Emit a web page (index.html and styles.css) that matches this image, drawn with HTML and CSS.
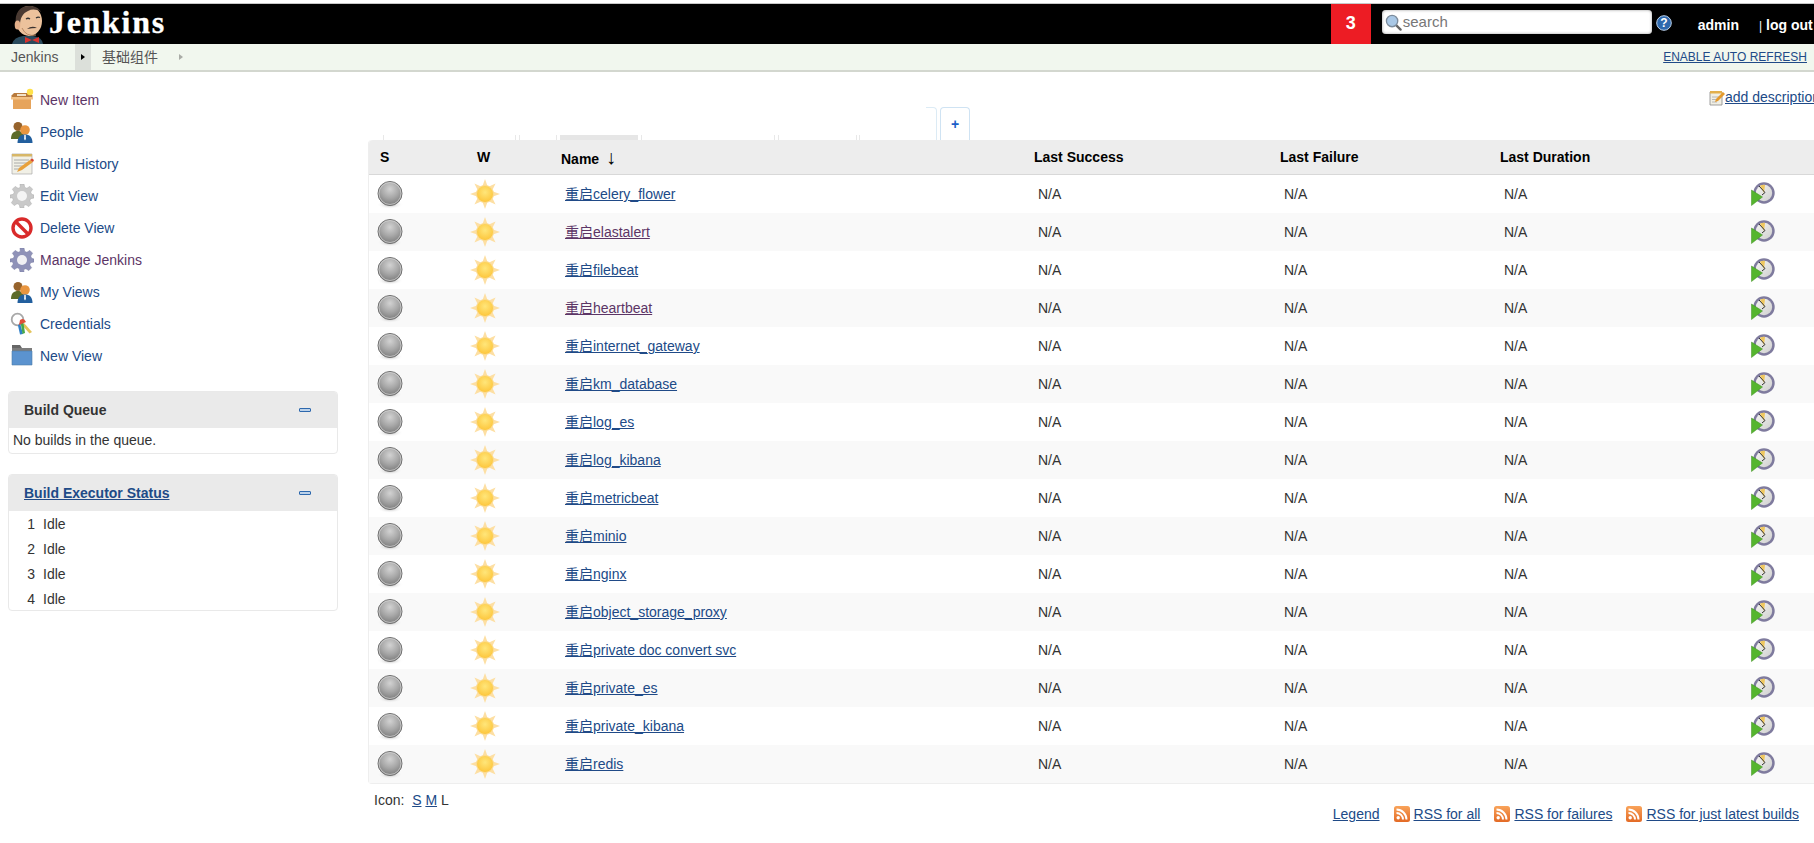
FILE: index.html
```html
<!DOCTYPE html>
<html lang="en">
<head>
<meta charset="utf-8">
<title>基础组件 [Jenkins]</title>
<link rel="stylesheet" href="styles.css">
</head>
<body>
<svg class="defs" width="0" height="0">
  <defs>
    <radialGradient id="ball" cx="50%" cy="32%" r="72%"><stop offset="0" stop-color="#d2d2d2"/><stop offset="0.5" stop-color="#a8a8a8"/><stop offset="1" stop-color="#767676"/></radialGradient>
    <radialGradient id="shade" cx="50%" cy="50%" r="50%"><stop offset="0" stop-color="#a8a8a8"/><stop offset="1" stop-color="#ffffff" stop-opacity="0"/></radialGradient>
    <radialGradient id="sunc" cx="50%" cy="40%" r="60%"><stop offset="0" stop-color="#ffe67a"/><stop offset="1" stop-color="#fdc53a"/></radialGradient>
    <linearGradient id="rssg" x1="0" y1="0" x2="0" y2="1"><stop offset="0" stop-color="#f9a35a"/><stop offset="1" stop-color="#e36a25"/></linearGradient>
    <linearGradient id="clockg" x1="0" y1="0" x2="1" y2="1"><stop offset="0" stop-color="#f6f6f2"/><stop offset="1" stop-color="#cfcfcf"/></linearGradient>
    <symbol id="i-ball" viewBox="0 0 32 32">
      <ellipse cx="15" cy="26.500" rx="13" ry="4.500" fill="url(#shade)"/>
      <circle cx="15" cy="15.500" r="12" fill="url(#ball)" stroke="#6e6e6e" stroke-width="1"/>
      <circle cx="15" cy="15.500" r="11" fill="none" stroke="#d8d8d8" stroke-width=".7"/>
    </symbol>
    <symbol id="i-sun" viewBox="0 0 32 32">
      <g fill="#fddfa3">
        <path d="M16 1l2.500 7h-5zM16 31l2.500-7h-5zM1 16l7 2.500v-5zM31 16l-7 2.500v-5zM5.400 5.400l6.700 3.200-3.500 3.500zM26.600 5.400l-6.700 3.200 3.500 3.500zM5.400 26.600l6.700-3.200-3.500-3.500zM26.600 26.600l-6.700-3.200 3.500-3.500z"/>
      </g>
      <circle cx="16" cy="16" r="8.500" fill="url(#sunc)" stroke="#fcdc94" stroke-width="1"/>
    </symbol>
    <symbol id="i-build" viewBox="0 0 24 24">
      <circle cx="13" cy="11" r="10.700" fill="#7f7b9e"/>
      <circle cx="13" cy="11" r="8.200" fill="url(#clockg)"/>
      <path d="M13 11L9 3.800A8.200 8.200 0 0 1 14 2.900z" fill="#efc75e"/>
      <path d="M8 4L14 10.500L11 13" fill="none" stroke="#333" stroke-width="1"/>
      <path d="M.5 8L11.500 15L.5 23.500z" fill="#55b52e" stroke="#3d8f1e" stroke-width=".5"/>
    </symbol>
    <symbol id="i-people" viewBox="0 0 24 24">
      <circle cx="8" cy="6.500" r="4.500" fill="#96632c"/>
      <path d="M1 19c0-6 3-8 7-8s6 2 6 8z" fill="#5d6b2a"/>
      <circle cx="15" cy="10" r="4.800" fill="#e8953f"/>
      <path d="M7.500 23c0-6 3-8.500 7.500-8.500S22.500 17 22.500 23z" fill="#225f9e"/>
      <path d="M14.200 15h1.600l.2 4-1 1.500-1-1.500z" fill="#dfe8f2"/>
    </symbol>
    <symbol id="i-gear" viewBox="0 0 24 24">
      <path d="M10 0h4l.7 3.400 2.200.9 2.900-1.900 2.800 2.800-1.900 2.900.9 2.200L24 11v3l-3.400.7-.9 2.200 1.900 2.900-2.800 2.800-2.900-1.900-2.200.9L14 24h-4l-.7-3.400-2.200-.9-2.900 1.900-2.800-2.800 1.900-2.900-.9-2.200L0 14v-3l3.400-.7.900-2.200-1.900-2.900 2.800-2.800 2.900 1.900 2.200-.9z" fill="#c9c9c9" stroke="#aaa" stroke-width=".5"/>
      <circle cx="12" cy="12" r="5" fill="#f4f4f4"/>
    </symbol>
    <symbol id="i-gear2" viewBox="0 0 24 24">
      <path d="M10 0h4l.7 3.400 2.200.9 2.900-1.900 2.800 2.800-1.900 2.900.9 2.200L24 11v3l-3.400.7-.9 2.200 1.900 2.900-2.800 2.800-2.900-1.900-2.200.9L14 24h-4l-.7-3.400-2.200-.9-2.900 1.900-2.800-2.800 1.900-2.900-.9-2.200L0 14v-3l3.400-.7.900-2.200-1.900-2.900 2.800-2.800 2.900 1.900 2.200-.9z" fill="#8f92b8" stroke="#777aa0" stroke-width=".5"/>
      <circle cx="12" cy="12" r="5" fill="#f1f1f4"/>
    </symbol>
  </defs>
</svg>

<header class="topbar">
  <div class="logo">
    <svg class="butler" viewBox="0 0 34 40" width="34" height="40" aria-hidden="true">
      <path d="M1 40q2-7 11-8h10q9 1 10 8z" fill="#2a4a5c"/>
      <ellipse cx="18" cy="17" rx="13" ry="15" fill="#ecc29c"/>
      <path d="M5 21C3 9 9 2 18 2c6 0 10 2 12 6-5-3-9-3-13-1-5 2-8 7-8 14z" fill="#4a3a32"/>
      <ellipse cx="6.500" cy="21" rx="2.800" ry="4.500" fill="#e2ae88"/>
      <path d="M15 15q2-1.500 4 0M25 14q2-1.500 4-.5" stroke="#333" stroke-width="1.300" fill="none"/>
      <path d="M16 25q5-4 10-1-5 0-10 1z" fill="#3b3330"/>
      <path d="M11 24q4 9 14 7" stroke="#b98a66" stroke-width="1" fill="none"/>
      <path d="M14 33l7 3 7-3v6l-7-3-7 3z" fill="#d9332e"/>
    </svg>
    <span class="wordmark">Jenkins</span>
  </div>
  <div class="topright">
    <div class="badge">3</div>
    <div class="search">
      <svg class="lens" viewBox="0 0 18 18" width="17" height="17" aria-hidden="true">
        <path d="M11.500 11.500l5 5" stroke="#666" stroke-width="2.500" stroke-linecap="round"/>
        <circle cx="7.500" cy="7.500" r="6" fill="#a9c8e6" stroke="#7c8c9c" stroke-width="1.400"/>
      </svg>
      <span class="placeholder">search</span>
    </div>
    <svg class="help" viewBox="0 0 16 16" width="16" height="16" aria-hidden="true">
      <circle cx="8" cy="8" r="7.300" fill="#2d68ad" stroke="#bcd2ea" stroke-width="1"/>
      <text x="8" y="12" text-anchor="middle" class="helptext">?</text>
    </svg>
    <span class="user">admin</span>
    <span class="logout"><span class="pipe">|</span> log out</span>
  </div>
</header>

<nav class="crumbs">
  <span class="crumb">Jenkins</span>
  <span class="sep sep-on"><i class="tri tri-dark"></i></span>
  <span class="crumb crumb-cjk">基础组件</span>
  <span class="sep"><i class="tri tri-light"></i></span>
  <a class="refresh" href="#">ENABLE AUTO REFRESH</a>
</nav>

<div class="page">
  <aside class="side">
    <ul class="tasks">
      <li><svg class="ticon" viewBox="0 0 24 24" aria-hidden="true"><path d="M1 8l3-3h16l3 3-2 2H3z" fill="#b97a3c"/><path d="M3 9h18v12H3z" fill="#e6a45c"/><path d="M1 9h22v2.500H1z" fill="#f3c184"/><path d="M7 6h9v2H7z" fill="#f2e2c8"/><circle cx="20" cy="4" r="3.200" fill="#ffe14a"/></svg><a class="visited" href="#">New Item</a></li>
      <li><svg class="ticon"><use href="#i-people"/></svg><a href="#">People</a></li>
      <li><svg class="ticon" viewBox="0 0 24 24" aria-hidden="true"><path d="M2 2h20v20H2z" fill="#f1f0e6" stroke="#aaa" stroke-width=".7"/><path d="M2 2h20v2.500H2z" fill="#d7b768"/><path d="M4 8h15M4 11h15M4 14h9M4 17h7" stroke="#999" stroke-width=".8"/><path d="M7 20l2-4L20 8l3 2-11 8z" fill="#e8a13a"/><path d="M20 8l3 2 1-2-2-1.500z" fill="#d8442c"/></svg><a href="#">Build History</a></li>
      <li><svg class="ticon"><use href="#i-gear"/></svg><a href="#">Edit View</a></li>
      <li><svg class="ticon" viewBox="0 0 24 24" aria-hidden="true"><circle cx="12" cy="12" r="9" fill="#fff" stroke="#d92a2a" stroke-width="3.400"/><path d="M5.500 5.500l13 13" stroke="#d92a2a" stroke-width="3.400"/></svg><a href="#">Delete View</a></li>
      <li><svg class="ticon"><use href="#i-gear2"/></svg><a class="visited" href="#">Manage Jenkins</a></li>
      <li><svg class="ticon"><use href="#i-people"/></svg><a href="#">My Views</a></li>
      <li><svg class="ticon" viewBox="0 0 24 24" aria-hidden="true"><circle cx="7.500" cy="7.500" r="5.800" fill="none" stroke="#a8a8a8" stroke-width="1.800"/><path d="M14 11l8 9-2.500 1.500-7-8z" fill="#e3c35a"/><path d="M10 11l3 11-3 .5-2-9z" fill="#2f7fc9"/><path d="M13 8l2 13-2.500 1-2-12z" fill="#48a84a"/><path d="M10 8q4-3 6 2l-7 3z" fill="#e0503a"/></svg><a href="#">Credentials</a></li>
      <li><svg class="ticon" viewBox="0 0 24 24" aria-hidden="true"><path d="M2 1h8l2 3h-10z" fill="#666"/><path d="M2 4h20v3H2z" fill="#7c7c7c"/><path d="M2 7h20v14H2z" fill="#5b93cf" stroke="#4d7da8" stroke-width=".6"/></svg><a href="#">New View</a></li>
    </ul>

    <section class="pane">
      <div class="pane-head"><span>Build Queue</span><i class="collapse"></i></div>
      <div class="pane-body queue">No builds in the queue.</div>
    </section>

    <section class="pane pane-exec">
      <div class="pane-head"><a href="#">Build Executor Status</a><i class="collapse"></i></div>
      <div class="pane-body execs">
        <div class="exec"><span class="num">1</span><span>Idle</span></div>
        <div class="exec"><span class="num">2</span><span>Idle</span></div>
        <div class="exec"><span class="num">3</span><span>Idle</span></div>
        <div class="exec"><span class="num">4</span><span>Idle</span></div>
      </div>
    </section>
  </aside>

  <main class="main">
    <div class="desc">
      <svg class="noteicon" viewBox="0 0 16 16" width="16" height="16" aria-hidden="true"><path d="M1 2h12v13H1z" fill="#f1efe4" stroke="#888" stroke-width=".8"/><path d="M1 1h12v2.500H1z" fill="#e3b04c"/><path d="M3 7h8M3 9.500h6M3 12h5" stroke="#aaa" stroke-width=".8"/><path d="M6 12l1-3 7-7 2 2-7 7z" fill="#e59a2c"/></svg><a href="#">add description</a>
    </div>
    <div class="tabs">
      <span class="tick t1"></span><span class="tick t2"></span><span class="tick t3"></span><span class="tick t3b"></span>
      <span class="tab-active"></span>
      <span class="tick t4"></span><span class="tick t5"></span><span class="tick t6"></span><span class="tick t7"></span><span class="tick t8"></span>
      <span class="tab-edge"></span>
      <span class="tab-add">+</span>
    </div>
    <table class="jobs">
      <colgroup>
        <col class="c-s"><col class="c-w"><col class="c-name"><col class="c-ok"><col class="c-fail"><col class="c-dur"><col class="c-act">
      </colgroup>
      <thead>
        <tr><th class="th-s">S</th><th class="th-w">W</th><th class="th-name">Name <span class="arrow">↓</span></th><th>Last Success</th><th>Last Failure</th><th>Last Duration</th><th></th></tr>
      </thead>
      <tbody>
        <tr><td class="ic"><svg class="ball"><use href="#i-ball"/></svg></td><td class="ic"><svg class="sun"><use href="#i-sun"/></svg></td><td><a href="#">重启celery_flower</a></td><td>N/A</td><td>N/A</td><td>N/A</td><td class="act"><svg class="build"><use href="#i-build"/></svg></td></tr>
        <tr><td class="ic"><svg class="ball"><use href="#i-ball"/></svg></td><td class="ic"><svg class="sun"><use href="#i-sun"/></svg></td><td><a class="visited" href="#">重启elastalert</a></td><td>N/A</td><td>N/A</td><td>N/A</td><td class="act"><svg class="build"><use href="#i-build"/></svg></td></tr>
        <tr><td class="ic"><svg class="ball"><use href="#i-ball"/></svg></td><td class="ic"><svg class="sun"><use href="#i-sun"/></svg></td><td><a href="#">重启filebeat</a></td><td>N/A</td><td>N/A</td><td>N/A</td><td class="act"><svg class="build"><use href="#i-build"/></svg></td></tr>
        <tr><td class="ic"><svg class="ball"><use href="#i-ball"/></svg></td><td class="ic"><svg class="sun"><use href="#i-sun"/></svg></td><td><a class="visited" href="#">重启heartbeat</a></td><td>N/A</td><td>N/A</td><td>N/A</td><td class="act"><svg class="build"><use href="#i-build"/></svg></td></tr>
        <tr><td class="ic"><svg class="ball"><use href="#i-ball"/></svg></td><td class="ic"><svg class="sun"><use href="#i-sun"/></svg></td><td><a href="#">重启internet_gateway</a></td><td>N/A</td><td>N/A</td><td>N/A</td><td class="act"><svg class="build"><use href="#i-build"/></svg></td></tr>
        <tr><td class="ic"><svg class="ball"><use href="#i-ball"/></svg></td><td class="ic"><svg class="sun"><use href="#i-sun"/></svg></td><td><a href="#">重启km_database</a></td><td>N/A</td><td>N/A</td><td>N/A</td><td class="act"><svg class="build"><use href="#i-build"/></svg></td></tr>
        <tr><td class="ic"><svg class="ball"><use href="#i-ball"/></svg></td><td class="ic"><svg class="sun"><use href="#i-sun"/></svg></td><td><a href="#">重启log_es</a></td><td>N/A</td><td>N/A</td><td>N/A</td><td class="act"><svg class="build"><use href="#i-build"/></svg></td></tr>
        <tr><td class="ic"><svg class="ball"><use href="#i-ball"/></svg></td><td class="ic"><svg class="sun"><use href="#i-sun"/></svg></td><td><a href="#">重启log_kibana</a></td><td>N/A</td><td>N/A</td><td>N/A</td><td class="act"><svg class="build"><use href="#i-build"/></svg></td></tr>
        <tr><td class="ic"><svg class="ball"><use href="#i-ball"/></svg></td><td class="ic"><svg class="sun"><use href="#i-sun"/></svg></td><td><a href="#">重启metricbeat</a></td><td>N/A</td><td>N/A</td><td>N/A</td><td class="act"><svg class="build"><use href="#i-build"/></svg></td></tr>
        <tr><td class="ic"><svg class="ball"><use href="#i-ball"/></svg></td><td class="ic"><svg class="sun"><use href="#i-sun"/></svg></td><td><a href="#">重启minio</a></td><td>N/A</td><td>N/A</td><td>N/A</td><td class="act"><svg class="build"><use href="#i-build"/></svg></td></tr>
        <tr><td class="ic"><svg class="ball"><use href="#i-ball"/></svg></td><td class="ic"><svg class="sun"><use href="#i-sun"/></svg></td><td><a href="#">重启nginx</a></td><td>N/A</td><td>N/A</td><td>N/A</td><td class="act"><svg class="build"><use href="#i-build"/></svg></td></tr>
        <tr><td class="ic"><svg class="ball"><use href="#i-ball"/></svg></td><td class="ic"><svg class="sun"><use href="#i-sun"/></svg></td><td><a href="#">重启object_storage_proxy</a></td><td>N/A</td><td>N/A</td><td>N/A</td><td class="act"><svg class="build"><use href="#i-build"/></svg></td></tr>
        <tr><td class="ic"><svg class="ball"><use href="#i-ball"/></svg></td><td class="ic"><svg class="sun"><use href="#i-sun"/></svg></td><td><a href="#">重启private doc convert svc</a></td><td>N/A</td><td>N/A</td><td>N/A</td><td class="act"><svg class="build"><use href="#i-build"/></svg></td></tr>
        <tr><td class="ic"><svg class="ball"><use href="#i-ball"/></svg></td><td class="ic"><svg class="sun"><use href="#i-sun"/></svg></td><td><a href="#">重启private_es</a></td><td>N/A</td><td>N/A</td><td>N/A</td><td class="act"><svg class="build"><use href="#i-build"/></svg></td></tr>
        <tr><td class="ic"><svg class="ball"><use href="#i-ball"/></svg></td><td class="ic"><svg class="sun"><use href="#i-sun"/></svg></td><td><a href="#">重启private_kibana</a></td><td>N/A</td><td>N/A</td><td>N/A</td><td class="act"><svg class="build"><use href="#i-build"/></svg></td></tr>
        <tr><td class="ic"><svg class="ball"><use href="#i-ball"/></svg></td><td class="ic"><svg class="sun"><use href="#i-sun"/></svg></td><td><a href="#">重启redis</a></td><td>N/A</td><td>N/A</td><td>N/A</td><td class="act"><svg class="build"><use href="#i-build"/></svg></td></tr>
      </tbody>
    </table>
    <div class="footer">
      <div class="sizes">Icon:&nbsp; <a href="#">S</a> <a href="#">M</a> L</div>
      <div class="feeds">
        <a href="#">Legend</a>
        <span class="feed"><svg class="rss" viewBox="0 0 16 16" width="16" height="16" aria-hidden="true"><rect width="16" height="16" rx="2.500" fill="url(#rssg)"/><circle cx="4.200" cy="11.800" r="1.700" fill="#fff"/><path d="M2.500 7a6.500 6.500 0 0 1 6.500 6.500M2.500 3.500a10 10 0 0 1 10 10" fill="none" stroke="#fff" stroke-width="2"/></svg><a href="#">RSS for all</a></span>
        <span class="feed"><svg class="rss" viewBox="0 0 16 16" width="16" height="16" aria-hidden="true"><rect width="16" height="16" rx="2.500" fill="url(#rssg)"/><circle cx="4.200" cy="11.800" r="1.700" fill="#fff"/><path d="M2.500 7a6.500 6.500 0 0 1 6.500 6.500M2.500 3.500a10 10 0 0 1 10 10" fill="none" stroke="#fff" stroke-width="2"/></svg><a href="#">RSS for failures</a></span>
        <span class="feed"><svg class="rss" viewBox="0 0 16 16" width="16" height="16" aria-hidden="true"><rect width="16" height="16" rx="2.500" fill="url(#rssg)"/><circle cx="4.200" cy="11.800" r="1.700" fill="#fff"/><path d="M2.500 7a6.500 6.500 0 0 1 6.500 6.500M2.500 3.500a10 10 0 0 1 10 10" fill="none" stroke="#fff" stroke-width="2"/></svg><a href="#">RSS for just latest builds</a></span>
      </div>
    </div>
  </main>
</div>
</body>
</html>
```
FILE: styles.css
```css
* { box-sizing: border-box; }
html, body { margin: 0; padding: 0; height: 843px; overflow: hidden; }
body {
  background: #fff;
  color: #333;
  font-family: "Liberation Sans", "Noto Sans CJK SC", sans-serif;
  font-size: 14px;
  line-height: 18px;
  border-top: 3px solid #fff;
  position: relative;
  width: 1814px;
}
.defs { position: absolute; }
a { color: #204a87; }
a.visited { color: #5c3566; }

.topbar {
  height: 41px;
  background: #000;
  border-top: 1px solid #c8c8c8;
  display: flex;
  justify-content: space-between;
  overflow: hidden;
}
.logo { display: flex; align-items: flex-start; padding-left: 11px; }
.butler { flex: none; }
.wordmark {
  font-family: "Liberation Serif", serif;
  font-weight: bold;
  font-size: 32px;
  line-height: 36px;
  color: #fff;
  letter-spacing: 1.700px;
  -webkit-text-stroke: 0.3px #fff;
  margin-left: 4px;
}
.topright { display: flex; align-items: flex-start; }
.badge {
  width: 40px;
  height: 40px;
  background: #ed1c24;
  color: #fff;
  font-weight: bold;
  font-size: 18px;
  line-height: 38px;
  text-align: center;
  margin-right: 11px;
}
.search {
  width: 270px;
  height: 24px;
  margin-top: 6px;
  background: #fff;
  border-radius: 4px;
  box-shadow: inset 0 0 3px #999;
  display: flex;
  align-items: center;
  padding-left: 3px;
  color: #777;
  font-size: 15px;
}
.lens { flex: none; margin-right: 1px; }
.help { margin: 11px 0 0 4px; flex: none; }
.helptext { fill: #fff; font: bold 12px "Liberation Sans", sans-serif; }
.user {
  color: #fff;
  font-weight: bold;
  font-size: 14px;
  line-height: 18px;
  margin: 12px 0 0 26px;
}
.logout {
  color: #fff;
  font-weight: bold;
  font-size: 14px;
  line-height: 18px;
  margin: 12px 0 0 20px;
  white-space: nowrap;
  width: 55px;
}
.pipe { font-weight: normal; font-size: 12px; }

.crumbs {
  height: 28px;
  background: #f1f7ee;
  border-bottom: 2px solid #d3d7cf;
  display: flex;
  align-items: stretch;
  color: #555;
  line-height: 27px;
}
.crumb { padding: 0 0 0 11px; width: 75px; }
.crumb-cjk { width: 82px; padding-left: 11px; white-space: nowrap; }
.sep { width: 16px; display: flex; align-items: center; justify-content: center; }
.sep-on { background: #dce0da; }
.tri { width: 0; height: 0; border-top: 3.500px solid transparent; border-bottom: 3.500px solid transparent; border-left: 4px solid #000; }
.tri-light { border-left-color: #a9aca6; }
.refresh { margin-left: auto; margin-right: 7px; font-size: 12px; }

.page { display: flex; align-items: flex-start; }
.side { width: 368px; flex: none; padding: 12px 0 0 8px; }
.tasks { list-style: none; margin: 0; padding: 0; }
.tasks li { height: 32px; display: flex; align-items: center; }
.tasks a { text-decoration: none; margin-left: 6px; }
.ticon { width: 24px; height: 24px; margin-left: 2px; flex: none; }

.pane {
  width: 330px;
  margin-top: 19px;
  border: 1px solid #e9e9e9;
  border-radius: 4px;
  overflow: hidden;
}
.pane-exec { margin-top: 20px; }
.pane-head {
  height: 36px;
  background: #eaeaea;
  display: flex;
  justify-content: space-between;
  align-items: center;
  padding: 0 26px 0 15px;
  font-weight: bold;
}
.pane-head a { color: #204a87; }
.collapse { width: 12px; height: 4px; background: #bcd2ea; border: 1px solid #2d68ad; display: block; border-radius: 1px; }
.queue { padding: 3px 3px 4px 4px; height: 25px; line-height: 18px; }
.execs { height: 99px; }
.exec { height: 25px; display: flex; align-items: center; }
.num { width: 26px; text-align: right; margin-right: 8px; }

.main { width: 1480px; flex: none; }
.desc { height: 36px; padding: 16px 0 0 1341px; white-space: nowrap; display: flex; align-items: flex-start; line-height: 18px; font-size: 14px; }
.noteicon { flex: none; margin-top: 2px; }
.tabs { height: 32px; position: relative; }
.tick { position: absolute; width: 1px; height: 5px; background: #e8e8e8; bottom: 0; }
.t1 { left: 15px; } .t2 { left: 147px; } .t3 { left: 151px; } .t3b { left: 188px; }
.t4 { left: 273px; } .t5 { left: 406px; } .t6 { left: 410px; } .t7 { left: 488px; } .t8 { left: 491px; }
.tab-active { position: absolute; left: 192px; bottom: 0; width: 78px; height: 5px; background: #e6e6e6; }
.tab-edge {
  position: absolute;
  left: 558px;
  bottom: 0;
  width: 11px;
  height: 33px;
  border: 1px solid #dcebf5;
  border-width: 1px 1px 0 0;
  border-radius: 0 4px 0 0;
}
.tab-add {
  position: absolute;
  left: 572px;
  bottom: 0;
  width: 30px;
  height: 33px;
  border: 1px solid #cfe3f3;
  border-bottom: 0;
  border-radius: 4px 4px 0 0;
  color: #1a5fc8;
  font-weight: bold;
  text-align: center;
  line-height: 33px;
}

.jobs {
  border-collapse: separate;
  border-spacing: 0;
  table-layout: fixed;
  width: 1480px;
  border-left: 1px solid #eee;
  border-bottom: 1px solid #eee;
  border-top-left-radius: 4px;
  border-bottom-left-radius: 4px;
}
.c-s { width: 94px; } .c-w { width: 85px; } .c-name { width: 473px; } .c-ok { width: 246px; } .c-fail { width: 220px; } .c-dur { width: 233px; } .c-act { width: 129px; }
.jobs th {
  height: 35px;
  background: #ededed;
  border-bottom: 1px solid #d8d8d8;
  color: #000;
  text-align: left;
  font-weight: bold;
  padding: 0 0 0 13px;
}
.jobs th.th-s { padding-left: 11px; border-top-left-radius: 4px; }
.jobs th.th-w { padding-left: 14px; }
.arrow { font-weight: normal; font-size: 20px; line-height: 1; margin-left: 3px; }
.jobs td { height: 38px; padding: 0 0 0 17px; vertical-align: middle; }
.jobs td.ic { padding: 0 0 0 6px; }
.jobs td.ic + td.ic { padding-left: 5px; }
.jobs tbody tr:nth-child(even) td { background: #f9f9f9; }
.ball, .sun { width: 32px; height: 32px; display: block; }
.sun { margin-left: 1px; }
.build { width: 24px; height: 24px; display: block; }
.jobs td.act { padding-left: 31px; }

.footer { display: flex; justify-content: space-between; }
.sizes { padding: 7px 0 0 6px; }
.feeds { display: flex; gap: 14px; padding: 21px 49px 0 0; align-items: center; }
.feed { display: flex; align-items: center; }
.rss { margin-right: 4px; flex: none; }
```
